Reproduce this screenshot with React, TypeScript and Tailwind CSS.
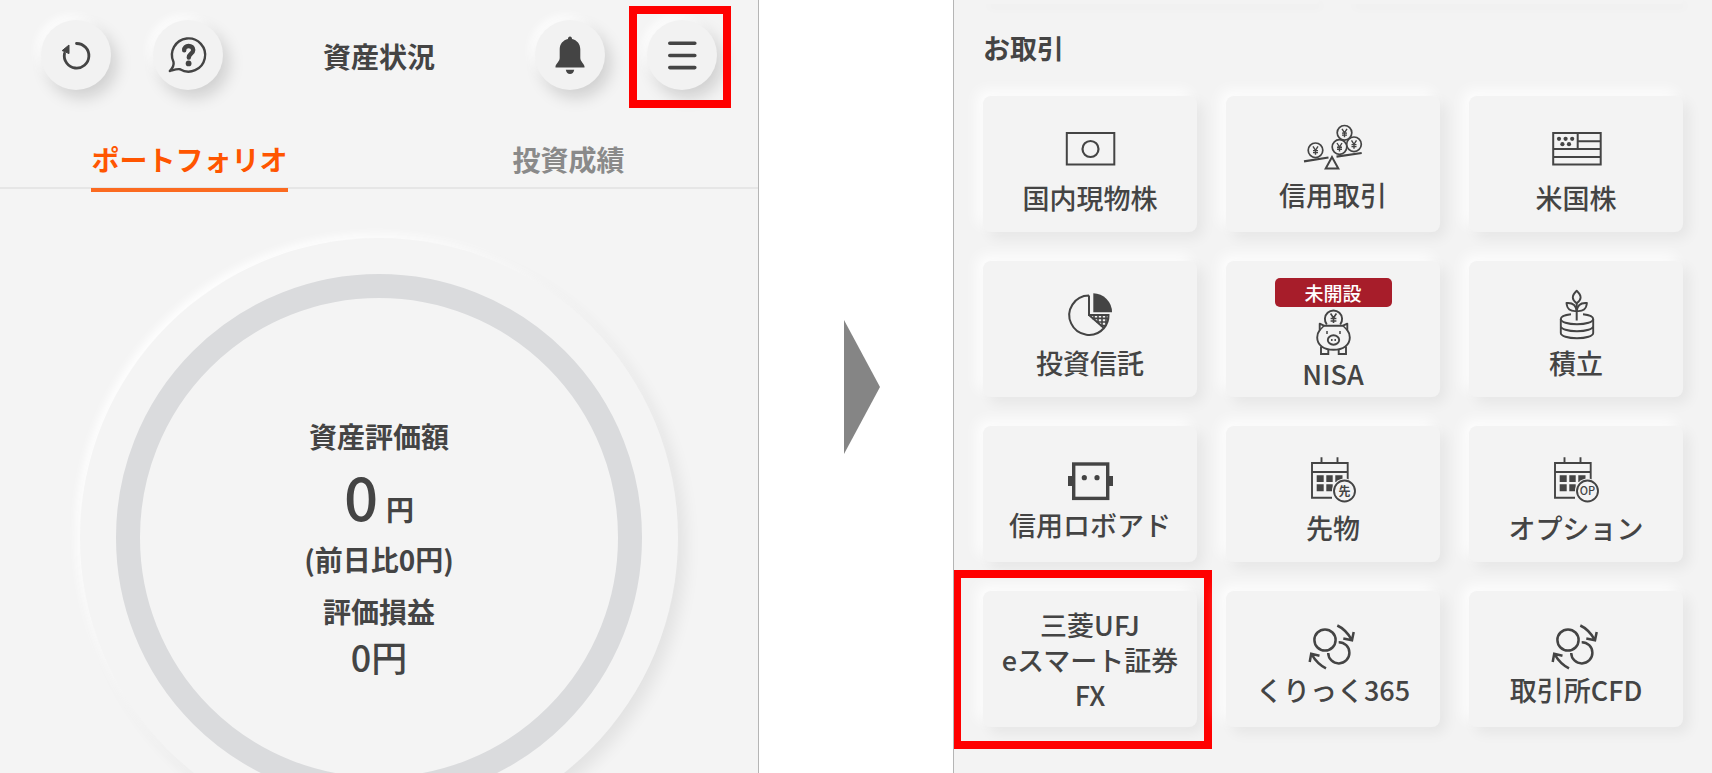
import React from "react";

const ink = "#444444";

type IconProps = { className?: string };

function RefreshIcon() {
  return (
    <svg viewBox="0 0 40 40" className="size-10" fill="none" aria-hidden="true">
      <path d="M20.5 8.5a12.3 12.3 0 1 1-12 10" stroke={ink} strokeWidth="2.8" strokeLinecap="round" />
      <path d="M6.2 15.6 13 10v8.6z" fill={ink} stroke={ink} strokeWidth="1" strokeLinejoin="round" />
    </svg>
  );
}

function HelpIcon() {
  return (
    <svg viewBox="0 0 44 44" className="size-11" fill="none" aria-hidden="true">
      <path
        d="M7.500 29A16.600 16.600 0 1 1 14 36.200C11 35.600 7.500 37 3.800 38 6.200 35.500 8.300 32.500 7.500 29Z"
        stroke={ink}
        strokeWidth="2.400"
        strokeLinejoin="round"
      />
      <path d="M18.200 17.200c0-2.800 1.800-4.200 4.400-4.200s4.600 1.500 4.600 4c0 3.600-4.400 3.800-4.400 7.600" stroke={ink} strokeWidth="4.400" strokeLinecap="round" />
      <circle cx="22.600" cy="30.400" r="2.900" fill={ink} />
    </svg>
  );
}

function BellIcon() {
  return (
    <svg viewBox="0 0 40 40" className="size-10" fill={ink} aria-hidden="true">
      <path d="M20 1.500c1.300 0 2 1 2 2.400 5 1.200 8.300 5 8.300 10.300v8.800c0 3.500 4.200 6 4.200 8.600v1H5.500v-1c0-2.600 4.200-5.100 4.200-8.600v-8.800C9.700 8.900 13 5.100 18 3.900c0-1.400.7-2.400 2-2.400Z" />
      <path d="M15.800 34.700h8.400c-.4 2.700-2 4.300-4.200 4.300s-3.800-1.600-4.200-4.300Z" />
    </svg>
  );
}

function MenuIcon() {
  return (
    <svg viewBox="0 0 40 40" className="size-10" stroke={ink} strokeWidth="3.600" strokeLinecap="round" aria-hidden="true">
      <path d="M7.800 8.300h25M7.800 20.500h25M7.800 32.600h25" />
    </svg>
  );
}

function BanknoteIcon({ className }: IconProps) {
  return (
    <svg viewBox="0 0 64 68" className={className} fill="none" stroke={ink} strokeWidth="2" aria-hidden="true">
      <rect x="8.800" y="18" width="47.500" height="31.500" />
      <circle cx="32.500" cy="34" r="8" strokeWidth="2.200" />
    </svg>
  );
}

function Coin({ x, y }: { x: number; y: number }) {
  return (
    <g>
      <circle cx={x} cy={y} r="7.300" fill="#f3f3f3" />
      <path d={`M${x - 2.5} ${y - 4}l2.500 4 2.500-4M${x} ${y}v4.500M${x - 2.5} ${y + 0.3}h5M${x - 2.5} ${y + 2.3}h5`} strokeWidth="1.400" />
    </g>
  );
}

function BalanceIcon({ className }: IconProps) {
  return (
    <svg viewBox="0 0 64 62" className={className} fill="none" stroke={ink} strokeWidth="1.700" aria-hidden="true">
      <Coin x={14.5} y={32.3} />
      <Coin x={38.5} y={29} />
      <Coin x={53} y={26.3} />
      <Coin x={43.5} y={14.8} />
      <path d="M3 43.300l24.500-3.800M35.500 38.600l25.200-3.600" strokeWidth="2.200" />
      <path d="M31 39.100l-6.300 11.500h12.600z" strokeWidth="2" />
    </svg>
  );
}

function FlagIcon({ className }: IconProps) {
  return (
    <svg viewBox="0 0 64 68" className={className} fill="none" stroke={ink} strokeWidth="2" aria-hidden="true">
      <rect x="9.200" y="18" width="47.500" height="31.500" />
      <path d="M33.700 18v16M9 34h48M9 42h48M33.700 26.200h23" />
      <g fill={ink} stroke="none">
        <circle cx="15" cy="23.800" r="2.100" />
        <circle cx="21.600" cy="23.800" r="2.100" />
        <circle cx="28.200" cy="23.800" r="2.100" />
        <circle cx="18.400" cy="29.200" r="2.100" />
        <circle cx="25" cy="29.200" r="2.100" />
      </g>
    </svg>
  );
}

function PieIcon({ className }: IconProps) {
  return (
    <svg viewBox="0 0 64 68" className={className} fill="none" stroke={ink} strokeWidth="2" aria-hidden="true">
      <path d="M31 15.500A19.700 19.700 0 1 0 46 48M31 15.500V35h19.500A19.500 19.500 0 0 1 46 48L31 35" />
      <path d="M35.300 13.300A18.800 18.800 0 0 1 54 32.200H35.300Z" fill={ink} stroke="none" />
      <path d="M36 35v4M40 35v8M44 35v11M48 35v9M34 38.400h16M38.500 42h11M42.500 45.500h5.500" strokeWidth="1.600" />
    </svg>
  );
}

function PiggyIcon({ className }: IconProps) {
  return (
    <svg viewBox="0 0 40 46" className={className} fill="none" stroke={ink} strokeWidth="1.900" aria-hidden="true">
      <path d="M13.800 15.500a8.600 8.600 0 1 1 13.400 0" />
      <path d="M17.600 4.500l2.900 4.500 2.900-4.500M20.500 9v5M17.600 9.500h5.800M17.600 12h5.800" strokeWidth="1.600" />
      <path d="M11 16.700h19l4.300-2v6.500c1.600 2 2.500 4.400 2.500 7.300 0 7.500-6.500 12.300-16.300 12.300S4.200 36 4.200 28.500c0-2.900.9-5.300 2.500-7.300v-6.500Z" strokeLinejoin="round" />
      <path d="M6.700 21.200l4.300-4.500M34.300 21.200L30 16.700" strokeWidth="1.400" />
      <ellipse cx="20.500" cy="31" rx="5.700" ry="4.700" />
      <path d="M14 22v3M27 22v3M18.800 30v2M22.200 30v2" strokeWidth="1.500" />
      <path d="M8 37.500V45h7.300v-4.500M33 37.500V45h-7.300v-4.500" />
    </svg>
  );
}

function SproutIcon({ className }: IconProps) {
  return (
    <svg viewBox="0 0 64 68" className={className} fill="none" stroke={ink} strokeWidth="1.900" strokeLinejoin="round" aria-hidden="true">
      <path d="M32.700 10.800c-5.200 5-5.200 8.500 0 12.500 5.200-4 5.200-7.500 0-12.500Z" />
      <path d="M32.700 31c-6.500.6-9.700-2-10.200-8 6.400-.6 9.500 2 10.200 8ZM32.700 31c6.500.6 9.700-2 10.200-8-6.400-.6-9.500 2-10.200 8Z" />
      <path d="M32.700 23v17.500" strokeWidth="2" />
      <path d="M27 34.300c-6.200.7-10.200 2.400-10.200 4.700 0 3 7 5.200 16.200 5.200S49.200 42 49.200 39c0-2.300-4-4-10.200-4.700" />
      <path d="M16.800 39v14c0 3 7 5.200 16.200 5.200S49.200 56 49.200 53V39M16.800 46c0 3 7 5.200 16.200 5.200S49.200 49 49.200 46" />
    </svg>
  );
}

function RobotIcon({ className }: IconProps) {
  return (
    <svg viewBox="0 0 64 62" className={className} fill="none" stroke={ink} aria-hidden="true">
      <rect x="15.700" y="16" width="34" height="34.400" strokeWidth="3.400" />
      <g fill={ink} stroke="none">
        <circle cx="26.300" cy="29.700" r="2.600" />
        <circle cx="39" cy="29.700" r="2.600" />
        <rect x="10" y="28" width="5" height="10" />
        <rect x="50.500" y="28" width="4.500" height="10" />
      </g>
    </svg>
  );
}

function CalendarIcon({ className, mark }: IconProps & { mark: string }) {
  return (
    <svg viewBox="0 0 64 68" className={className} fill="none" stroke={ink} strokeWidth="1.900" aria-hidden="true">
      <path d="M46.700 36V18H11v34.700h20M11 27h35.700M20.500 12.300V18M36.500 12.300V18" />
      <g fill={ink} stroke="none">
        <path d="M15.700 30.300h7V37h-7zM25.300 30.300h6.400V37h-6.400zM34.300 30.300h7.200V37h-7.200zM15.700 39.300h7v7h-7zM25.300 39.300h6.400v7h-6.400z" />
      </g>
      <circle cx="43.500" cy="46" r="12.500" fill="#f3f3f3" stroke="none" />
      <circle cx="43.500" cy="46" r="10.500" />
      <text
        x="43.500"
        y={mark === "OP" ? 50 : 50.5}
        textAnchor="middle"
        fill={ink}
        stroke="none"
        className={mark === "OP" ? "text-[11px] font-medium" : "text-[12px] font-bold"}
      >
        {mark}
      </text>
    </svg>
  );
}

function ExchangeIcon({ className }: IconProps) {
  return (
    <svg viewBox="0 0 64 62" className={className} fill="none" stroke={ink} strokeWidth="2.500" aria-hidden="true">
      <circle cx="24" cy="27" r="10.600" />
      <path d="M37.700 29.200A10.600 10.600 0 1 1 27.200 40" />
      <path d="M36.300 12.500c5.500 2.500 10.500 7.500 14.500 14.300M42.300 25.500l8.700 1.800 1.700-8.300" />
      <path d="M25 55.300C19.500 52.500 14.500 48 10.700 41.300M18.500 42.700l-8.300-2-1.500 8.300" />
    </svg>
  );
}

function RoundButton({ label, children }: { label: string; children: React.ReactNode }) {
  return (
    <button
      type="button"
      aria-label={label}
      className="flex size-[70px] items-center justify-center rounded-full bg-[#f2f2f2] shadow-[6px_8px_16px_rgba(0,0,0,0.15),-5px_-5px_8px_rgba(255,255,255,0.8)]"
    >
      {children}
    </button>
  );
}

const card =
  "relative flex h-[136px] flex-col items-center justify-center rounded-lg bg-[#f3f3f3] font-medium shadow-[6px_6px_14px_rgba(0,0,0,0.06),-6px_-6px_14px_rgba(255,255,255,0.9)]";
const tall = "h-[68px] w-16";
const short = "h-[62px] w-16";

const products = [
  { label: "国内現物株", icon: <BanknoteIcon className={tall} /> },
  { label: "信用取引", icon: <BalanceIcon className={short} /> },
  { label: "米国株", icon: <FlagIcon className={tall} /> },
  { label: "投資信託", icon: <PieIcon className={tall} /> },
  { label: "NISA", badge: "未開設", icon: <PiggyIcon className="mb-1 h-[46px] w-10" /> },
  { label: "積立", icon: <SproutIcon className={tall} /> },
  { label: "信用ロボアド", icon: <RobotIcon className={short} /> },
  { label: "先物", icon: <CalendarIcon className={tall} mark="先" /> },
  { label: "オプション", icon: <CalendarIcon className={tall} mark="OP" /> },
  { label: "三菱UFJ\neスマート証券\nFX", highlighted: true },
  { label: "くりっく365", icon: <ExchangeIcon className={short} /> },
  { label: "取引所CFD", icon: <ExchangeIcon className={short} /> },
];

function AssetPanel() {
  return (
    <section className="min-w-0 flex-1 overflow-hidden border-r border-[#b5b5b5] bg-[#f4f4f4]">
      <header className="flex h-[132px] items-start justify-between px-[41px] pt-5">
        <div className="flex gap-[42px]">
          <RoundButton label="更新"><RefreshIcon /></RoundButton>
          <RoundButton label="ヘルプ"><HelpIcon /></RoundButton>
        </div>
        <h1 className="text-[28px] leading-[72px] font-bold">資産状況</h1>
        <div className="flex gap-[42px]">
          <RoundButton label="通知"><BellIcon /></RoundButton>
          <div className="relative">
            <RoundButton label="メニュー"><MenuIcon /></RoundButton>
            <span className="pointer-events-none absolute -top-3.5 -right-3.5 -bottom-[18px] -left-[18px] border-8 border-[#ff0000]" />
          </div>
        </div>
      </header>
      <nav className="flex h-[57px] border-b-2 border-[#e6e6e6]">
        <div className="flex flex-1 justify-center">
          <button type="button" className="h-[60px] border-b-4 border-[#fb6a20] pb-0.5 text-[28px] leading-[54px] font-bold text-[#ff5500]">
            ポートフォリオ
          </button>
        </div>
        <div className="flex flex-1 justify-center">
          <button type="button" className="h-[60px] border-b-4 border-transparent pb-0.5 text-[28px] leading-[54px] font-bold text-[#8a8a8a]">
            投資成績
          </button>
        </div>
      </nav>
      <div className="mx-auto mt-[49px] aspect-square w-[79%] rounded-full bg-[#f4f4f4] p-9 shadow-[8px_8px_16px_rgba(0,0,0,0.07),-4px_-4px_8px_rgba(255,255,255,0.9)]">
        <div className="flex size-full flex-col items-center rounded-full border-24 border-[#dadbdd] pt-[118px] text-[28px] font-bold">
          <p className="leading-10">資産評価額</p>
          <p className="flex items-baseline gap-2">
            <span className="text-[60px] leading-[78px] font-medium">0</span>
            <span className="leading-10">円</span>
          </p>
          <p className="leading-[50px]">(前日比0円)</p>
          <p className="leading-[54px]">評価損益</p>
          <p className="text-[36px] leading-9 font-medium">0円</p>
        </div>
      </div>
    </section>
  );
}

function TradePanel() {
  return (
    <section className="min-w-0 flex-1 overflow-hidden border-l border-[#b5b5b5] bg-[#f3f3f3]">
      <div className="px-[29px]">
        <div className="grid grid-cols-2 gap-[29px]" aria-hidden="true">
          <div className="h-1 rounded-b-lg shadow-[4px_4px_10px_rgba(0,0,0,0.03)]" />
          <div className="h-1 rounded-b-lg shadow-[4px_4px_10px_rgba(0,0,0,0.03)]" />
        </div>
        <h2 className="pt-6 pb-7 text-[27px] leading-10 font-bold">お取引</h2>
        <div className="grid grid-cols-3 gap-[29px]">
          {products.map((item) => (
            <button type="button" key={item.label} className={item.badge ? `${card} pt-2` : card}>
              {item.badge && (
                <span className="mb-0.5 w-[117px] rounded-[5px] bg-[#a71d2a] text-center text-[19px] leading-[29px] text-white">
                  {item.badge}
                </span>
              )}
              {item.icon}
              <span className={item.icon ? "text-[27px] leading-[30px]" : "text-[27px] leading-[35px] whitespace-pre-line"}>
                {item.label}
              </span>
              {item.highlighted && (
                <span className="pointer-events-none absolute -top-[21px] -right-[15px] -bottom-[22px] -left-[30px] border-8 border-[#ff0000]" />
              )}
            </button>
          ))}
        </div>
      </div>
    </section>
  );
}

export default function App() {
  return (
    <main className="flex h-screen overflow-hidden bg-white font-['Noto_Sans_CJK_JP',sans-serif] text-[#444444]">
      <AssetPanel />
      <div className="flex w-[194px] shrink-0 items-center justify-center pl-3">
        <svg viewBox="0 0 36 134" className="h-[134px] w-9" aria-hidden="true">
          <path d="M0 0l36 67L0 134z" fill="#858585" />
        </svg>
      </div>
      <TradePanel />
    </main>
  );
}
